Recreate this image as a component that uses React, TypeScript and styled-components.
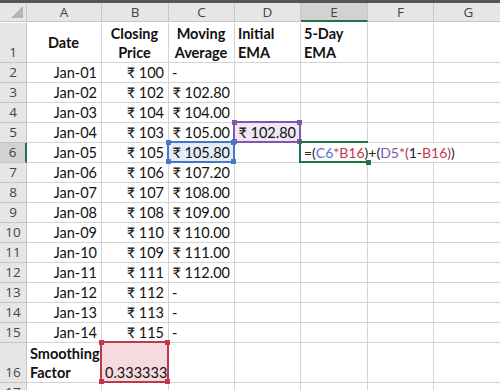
import styled, { createGlobalStyle } from 'styled-components';

const GlobalStyle = createGlobalStyle`
    html, body {
        margin: 0;
        padding: 0;
        background: #ffffff;
        overflow: hidden;
    }
    body {
        font-family: 'Lato', 'Open Sans', sans-serif;
    }
`;

const COLS = [27, 75, 67, 66, 66, 67, 66, 70];
const GRID = '#d4d4d4';
const EXCEL_GREEN = '#217346';

const Sheet = styled.div`
    width: 500px;
    height: 390px;
    overflow: hidden;
    border-top: 3px solid #555555;
    box-sizing: border-box;
`;

const Grid = styled.div`
    display: grid;
    grid-template-columns: ${COLS.map((c) => `${c}px`).join(' ')};
    grid-auto-rows: 20px;
`;

const Corner = styled.div`
    height: 19px;
    background: #e6e6e6;
    border-right: 1px solid #c6c6c6;
    border-bottom: 1px solid #c6c6c6;
    box-sizing: border-box;
    position: relative;
    overflow: hidden;

    &::after {
        content: '';
        position: absolute;
        right: 3px;
        bottom: 3px;
        border-left: 12px solid transparent;
        border-bottom: 12px solid #b4b4b4;
    }
`;

const ColHead = styled.div<{ active?: boolean }>`
    height: 19px;
    background: ${(p) => (p.active ? '#d2d2d2' : '#e6e6e6')};
    border-right: 1px solid #c6c6c6;
    border-bottom: ${(p) => (p.active ? `2px solid ${EXCEL_GREEN}` : '1px solid #c6c6c6')};
    box-sizing: border-box;
    display: flex;
    align-items: center;
    justify-content: center;
    font-family: 'Open Sans', sans-serif;
    font-size: 13.5px;
    color: #444;
`;

const RowHead = styled.div<{ tall?: boolean; active?: boolean }>`
    grid-row: span ${(p) => (p.tall ? 2 : 1)};
    background: ${(p) => (p.active ? '#d2d2d2' : '#e6e6e6')};
    border-right: ${(p) => (p.active ? `2px solid ${EXCEL_GREEN}` : '1px solid #c6c6c6')};
    border-bottom: 1px solid #c6c6c6;
    box-sizing: border-box;
    display: flex;
    align-items: flex-end;
    justify-content: center;
    padding-bottom: 1px;
    font-family: 'Open Sans', sans-serif;
    font-size: 13.5px;
    line-height: 18px;
    color: #444;
`;

const Cell = styled.div<{
    align?: 'left' | 'right' | 'center';
    valign?: 'top' | 'center' | 'bottom';
    tall?: boolean;
    bold?: boolean;
    fill?: string;
}>`
    position: relative;
    grid-row: span ${(p) => (p.tall ? 2 : 1)};
    border-right: 1px solid ${GRID};
    border-bottom: 1px solid ${GRID};
    box-sizing: border-box;
    display: flex;
    flex-direction: column;
    justify-content: ${(p) =>
        p.valign === 'top' ? 'flex-start' : p.valign === 'center' ? 'center' : 'flex-end'};
    text-align: ${(p) => p.align || 'left'};
    padding: 0 4px 0 3px;
    font-size: 14.5px;
    line-height: 19px;
    font-weight: ${(p) => (p.bold ? 700 : 400)};
    color: #111;
    white-space: nowrap;
    background: ${(p) => p.fill || 'transparent'};
`;

const Selection = styled.div<{ color: string }>`
    position: absolute;
    left: -2px;
    top: -2px;
    right: -1px;
    bottom: -1px;
    border: 2px solid ${(p) => p.color};
    pointer-events: none;
    z-index: 2;

    span {
        position: absolute;
        width: 5px;
        height: 5px;
        background: ${(p) => p.color};
    }
    span:nth-child(1) { left: -3px; top: -3px; }
    span:nth-child(2) { right: -3px; top: -3px; }
    span:nth-child(3) { left: -3px; bottom: -3px; }
    span:nth-child(4) { right: -3px; bottom: -3px; }
`;

const EditBox = styled.div`
    position: absolute;
    left: -2px;
    top: -2px;
    right: -1px;
    bottom: -1px;
    border: 2px solid ${EXCEL_GREEN};
    border-right: none;
    z-index: 3;

    &::after {
        content: '';
        position: absolute;
        right: -3px;
        bottom: -4px;
        width: 5px;
        height: 5px;
        background: ${EXCEL_GREEN};
    }
`;

const Formula = styled.div`
    position: absolute;
    left: 1px;
    top: 0;
    bottom: 0;
    width: 150px;
    background: #ffffff;
    z-index: 2;
    display: flex;
    align-items: center;
    padding-left: 2px;
    font-size: 14px;
    color: #222;
    white-space: nowrap;
`;

const Ref = styled.span<{ color: string }>`
    color: ${(p) => p.color};
`;

const Caret = styled.span`
    display: inline-block;
    width: 1px;
    height: 17px;
    margin-left: 1px;
    background: #111;
`;

const BLUE = '#4a76c6';
const RED = '#c0394b';
const PURPLE = '#8157ae';

type Row = { n: number; date: string; price: string; avg: string };

const rows: Row[] = [
    { n: 2, date: 'Jan-01', price: '100', avg: '' },
    { n: 3, date: 'Jan-02', price: '102', avg: '102.80' },
    { n: 4, date: 'Jan-03', price: '104', avg: '104.00' },
    { n: 5, date: 'Jan-04', price: '103', avg: '105.00' },
    { n: 6, date: 'Jan-05', price: '105', avg: '105.80' },
    { n: 7, date: 'Jan-06', price: '106', avg: '107.20' },
    { n: 8, date: 'Jan-07', price: '107', avg: '108.00' },
    { n: 9, date: 'Jan-08', price: '108', avg: '109.00' },
    { n: 10, date: 'Jan-09', price: '110', avg: '110.00' },
    { n: 11, date: 'Jan-10', price: '109', avg: '111.00' },
    { n: 12, date: 'Jan-11', price: '111', avg: '112.00' },
    { n: 13, date: 'Jan-12', price: '112', avg: '' },
    { n: 14, date: 'Jan-13', price: '113', avg: '' },
    { n: 15, date: 'Jan-14', price: '115', avg: '' },
];

const Handles = () => (
    <>
        <span />
        <span />
        <span />
        <span />
    </>
);

function Blank({ tall }: { tall?: boolean }) {
    return <Cell tall={tall} />;
}

function App() {
    const letters = ['A', 'B', 'C', 'D', 'E', 'F', 'G'];
    return (
        <Sheet>
            <GlobalStyle />
            <Grid>
                <Corner />
                {letters.map((l) => (
                    <ColHead key={l} active={l === 'E'}>
                        {l}
                    </ColHead>
                ))}

                <RowHead tall>1</RowHead>
                <Cell tall bold align="center" valign="center">
                    Date
                </Cell>
                <Cell tall bold align="center" valign="bottom">
                    <div>Closing</div>
                    <div>Price</div>
                </Cell>
                <Cell tall bold align="center" valign="bottom">
                    <div>Moving</div>
                    <div>Average</div>
                </Cell>
                <Cell tall bold valign="bottom">
                    <div>Initial</div>
                    <div>EMA</div>
                </Cell>
                <Cell tall bold valign="bottom">
                    <div>5-Day</div>
                    <div>EMA</div>
                </Cell>
                <Blank tall />
                <Blank tall />

                {rows.map((r) => (
                    <Row key={r.n} row={r} />
                ))}

                <RowHead tall>16</RowHead>
                <Cell tall bold valign="bottom">
                    <div>Smoothing</div>
                    <div>Factor</div>
                </Cell>
                <Cell tall align="right" fill="#f7dadd">
                    0.333333
                    <Selection color={RED}>
                        <Handles />
                    </Selection>
                </Cell>
                <Blank tall />
                <Blank tall />
                <Blank tall />
                <Blank tall />
                <Blank tall />

                <RowHead>17</RowHead>
                {letters.map((l) => (
                    <Blank key={l} />
                ))}
            </Grid>
        </Sheet>
    );
}

function Row({ row }: { row: Row }) {
    const isD5 = row.n === 5;
    const isC6 = row.n === 6;
    return (
        <>
            <RowHead active={isC6}>{row.n}</RowHead>
            <Cell align="right">{row.date}</Cell>
            <Cell align="right">₹ {row.price}</Cell>
            {row.avg ? (
                <Cell align="right" fill={isC6 ? '#e4ecf8' : undefined}>
                    ₹ {row.avg}
                    {isC6 && (
                        <Selection color={BLUE}>
                            <Handles />
                        </Selection>
                    )}
                </Cell>
            ) : (
                <Cell>-</Cell>
            )}
            {isD5 ? (
                <Cell align="right" fill="#efe7f5">
                    ₹ 102.80
                    <Selection color={PURPLE}>
                        <Handles />
                    </Selection>
                </Cell>
            ) : (
                <Blank />
            )}
            {isC6 ? (
                <Cell>
                    <Formula>
                        =(<Ref color={BLUE}>C6</Ref>
                        <Ref color={RED}>*</Ref>
                        <Ref color={RED}>B16</Ref>)+(<Ref color={PURPLE}>D5</Ref>
                        <Ref color={RED}>*</Ref>
                        <Ref color="#a0384a">(</Ref>1-<Ref color={RED}>B16</Ref>
                        <Ref color="#a0384a">)</Ref>)
                        <Caret />
                    </Formula>
                    <EditBox />
                </Cell>
            ) : (
                <Blank />
            )}
            <Blank />
            <Blank />
        </>
    );
}

export default App;
